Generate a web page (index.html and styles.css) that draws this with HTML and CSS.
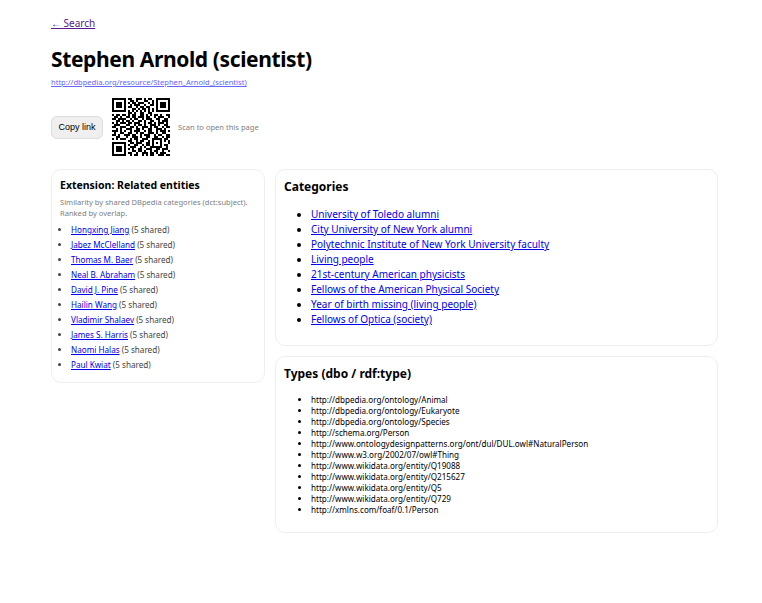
FILE: index.html
```html
<!DOCTYPE html>
<html lang="en">
<head>
    <meta charset="UTF-8">
    <title>Stephen Arnold (scientist)</title>
    <link rel="stylesheet" href="styles.css">
</head>
<body>
    <div class="container">
        <a class="back" href="#">← Search</a>
        <h1>Stephen Arnold (scientist)</h1>
        <a class="uri" href="#">http://dbpedia.org/resource/Stephen_Arnold_(scientist)</a>
        <div class="share">
            <button class="copy">Copy link</button>
            <svg class="qr" viewBox="0 0 29 29" shape-rendering="crispEdges">
                <path fill-rule="evenodd" d="M0 0h7v7H0zM1 1v5h5V1zM2 2h3v3H2zM22 0h7v7h-7zM23 1v5h5V1zM24 2h3v3h-3zM0 22h7v7H0zM1 23v5h5v-5zM2 24h3v3H2zM20 20h5v5h-5zM21 21v3h3v-3zM22 22h1v1h-1z"/>
                <path fill="none" stroke="#000" d="M8 .5h2m2 0h3m1 0h1m1 0h2M9 1.5h2m1 0h1m3 0h2m2 0h1M8 2.5h1m1 0h2m1 0h3m2 0h1m1 0h1M9 3.5h1m1 0h3m2 0h1m2 0h2M8 4.5h2m2 0h1m1 0h2m1 0h2M10 5.5h2m1 0h1m1 0h2m1 0h1m1 0h1M8 6.5h1m1 0h1m1 0h1m1 0h1m1 0h1m1 0h1m1 0h1M8 7.5h2m1 0h1m2 0h2m2 0h2M0 8.5h1m1 0h2m1 0h2m1 0h1m1 0h2m2 0h2m1 0h1m1 0h1m1 0h2m1 0h1m2 0h2M1 9.5h2m1 0h1m2 0h2m1 0h2m1 0h3m1 0h2m2 0h1m1 0h3m2 0h1M0 10.5h2m1 0h4m2 0h1m1 0h2m2 0h1m1 0h3m2 0h2m2 0h2M2 11.5h2m1 0h1m1 0h2m1 0h1m2 0h2m1 0h1m2 0h2m2 0h1m1 0h3M0 12.5h1m1 0h1m1 0h3m1 0h2m1 0h3m2 0h1m1 0h2m1 0h1m1 0h3m1 0h1M1 13.5h3m3 0h2m2 0h1m1 0h2m1 0h1m2 0h3m1 0h1m2 0h2M0 14.5h2m2 0h3m2 0h2m1 0h1m2 0h3m1 0h1m1 0h2m2 0h1m1 0h2M2 15.5h1m1 0h1m2 0h3m2 0h2m1 0h1m2 0h2m2 0h3m1 0h1M0 16.5h3m1 0h1m1 0h1m2 0h1m1 0h3m2 0h1m1 0h2m2 0h1m1 0h3m1 0h1M1 17.5h1m2 0h2m2 0h2m2 0h1m1 0h2m2 0h3m1 0h1m2 0h2M0 18.5h2m1 0h1m2 0h3m1 0h2m2 0h1m1 0h3m2 0h1m1 0h2m2 0h2M2 19.5h2m3 0h1m2 0h3m1 0h1m2 0h2m2 0h2m2 0h1m1 0h2M0 20.5h1m1 0h1m1 0h3m2 0h1m1 0h2m2 0h3m8 0h2M8 21.5h2m2 0h1m1 0h2m2 0h1m7 0h1m1 0h1M9 22.5h2m1 0h3m2 0h2m9 0h2M8 23.5h1m2 0h2m2 0h1m1 0h2m7 0h2M9 24.5h3m2 0h1m1 0h1m2 0h1m7 0h1M8 25.5h1m1 0h1m2 0h2m2 0h3m2 0h2m1 0h3M10 26.5h2m1 0h2m1 0h1m2 0h1m1 0h2m2 0h1m2 0h1M8 27.5h2m2 0h1m2 0h3m1 0h2m1 0h1m1 0h3M9 28.5h1m1 0h2m2 0h1m1 0h1m1 0h2m2 0h3m1 0h2"/>
            </svg>
            <span class="hint">Scan to open this page</span>
        </div>
        <div class="columns">
            <aside class="card side">
                <h3>Extension: Related entities</h3>
                <p class="hint note">Similarity by shared DBpedia categories (dct:subject). Ranked by overlap.</p>
                <ul class="related">
                    <li><a href="#">Hongxing Jiang</a> (5 shared)</li>
                    <li><a href="#">Jabez McClelland</a> (5 shared)</li>
                    <li><a href="#">Thomas M. Baer</a> (5 shared)</li>
                    <li><a href="#">Neal B. Abraham</a> (5 shared)</li>
                    <li><a href="#">David J. Pine</a> (5 shared)</li>
                    <li><a href="#">Hailin Wang</a> (5 shared)</li>
                    <li><a href="#">Vladimir Shalaev</a> (5 shared)</li>
                    <li><a href="#">James S. Harris</a> (5 shared)</li>
                    <li><a href="#">Naomi Halas</a> (5 shared)</li>
                    <li><a href="#">Paul Kwiat</a> (5 shared)</li>
                </ul>
            </aside>
            <main class="content">
                <section class="card">
                    <h2>Categories</h2>
                    <ul class="cats">
                        <li><a href="#">University of Toledo alumni</a></li>
                        <li><a href="#">City University of New York alumni</a></li>
                        <li><a href="#">Polytechnic Institute of New York University faculty</a></li>
                        <li><a href="#">Living people</a></li>
                        <li><a href="#">21st-century American physicists</a></li>
                        <li><a href="#">Fellows of the American Physical Society</a></li>
                        <li><a href="#">Year of birth missing (living people)</a></li>
                        <li><a href="#">Fellows of Optica (society)</a></li>
                    </ul>
                </section>
                <section class="card">
                    <h2>Types (dbo / rdf:type)</h2>
                    <ul class="types">
                        <li>http://dbpedia.org/ontology/Animal</li>
                        <li>http://dbpedia.org/ontology/Eukaryote</li>
                        <li>http://dbpedia.org/ontology/Species</li>
                        <li>http://schema.org/Person</li>
                        <li>http://www.ontologydesignpatterns.org/ont/dul/DUL.owl#NaturalPerson</li>
                        <li>http://www.w3.org/2002/07/owl#Thing</li>
                        <li>http://www.wikidata.org/entity/Q19088</li>
                        <li>http://www.wikidata.org/entity/Q215627</li>
                        <li>http://www.wikidata.org/entity/Q5</li>
                        <li>http://www.wikidata.org/entity/Q729</li>
                        <li>http://xmlns.com/foaf/0.1/Person</li>
                    </ul>
                </section>
            </main>
        </div>
    </div>
</body>
</html>
```

FILE: styles.css
```css
* {
    box-sizing: border-box;
}
body {
    margin: 0;
    font-family: "Noto Sans", sans-serif;
    font-size: 12px;
    color: #000;
    background: #fff;
}
a {
    color: #00e;
}
.container {
    width: 667px;
    margin-left: 51px;
    padding-top: 16px;
}
.back {
    display: block;
    width: max-content;
    font-size: 10px;
    line-height: 15px;
    color: #551a8b;
}
h1 {
    margin: 12px 0 0;
    font-size: 21px;
    line-height: 32px;
    font-weight: 700;
    letter-spacing: -0.38px;
}
.uri {
    display: block;
    width: max-content;
    margin-top: 2px;
    font-size: 7.55px;
    line-height: 11px;
    color: #6464ff;
}
.share {
    display: flex;
    align-items: center;
    gap: 8px;
    margin-top: 10px;
}
.copy {
    width: 52px;
    height: 23px;
    margin-right: 1px;
    padding: 0;
    font-family: "Liberation Sans", sans-serif;
    font-size: 9px;
    background: #efefef;
    border: 1px solid #ddd;
    border-radius: 6px;
}
.qr {
    width: 58px;
    height: 58px;
}
.hint {
    font-size: 7.55px;
    color: #808080;
}
.columns {
    display: flex;
    align-items: flex-start;
    gap: 10px;
    margin-top: 13px;
}
.card {
    border: 1px solid #eee;
    border-radius: 10px;
    padding: 8px;
}
.side {
    width: 214px;
    flex: none;
}
.content {
    flex: 1;
    display: flex;
    flex-direction: column;
    gap: 10px;
}
h2 {
    margin: 0;
    font-size: 12px;
    line-height: 17px;
    font-weight: 700;
}
h3 {
    margin: 0;
    font-size: 10.5px;
    line-height: 15px;
    font-weight: 700;
}
.note {
    margin: 4px 0 0;
    line-height: 11px;
}
ul {
    margin: 0;
    padding: 0;
}
.related {
    margin: 3px 0 2px;
    padding-left: 11px;
    font-size: 8.15px;
    line-height: 15px;
    color: #444;
}
.cats {
    margin: 12px 0 10px;
    padding-left: 27px;
    font-size: 10px;
    line-height: 15px;
}
.types {
    margin: 12px 0 9px;
    padding-left: 27px;
    font-size: 8.1px;
    line-height: 11px;
}
```
